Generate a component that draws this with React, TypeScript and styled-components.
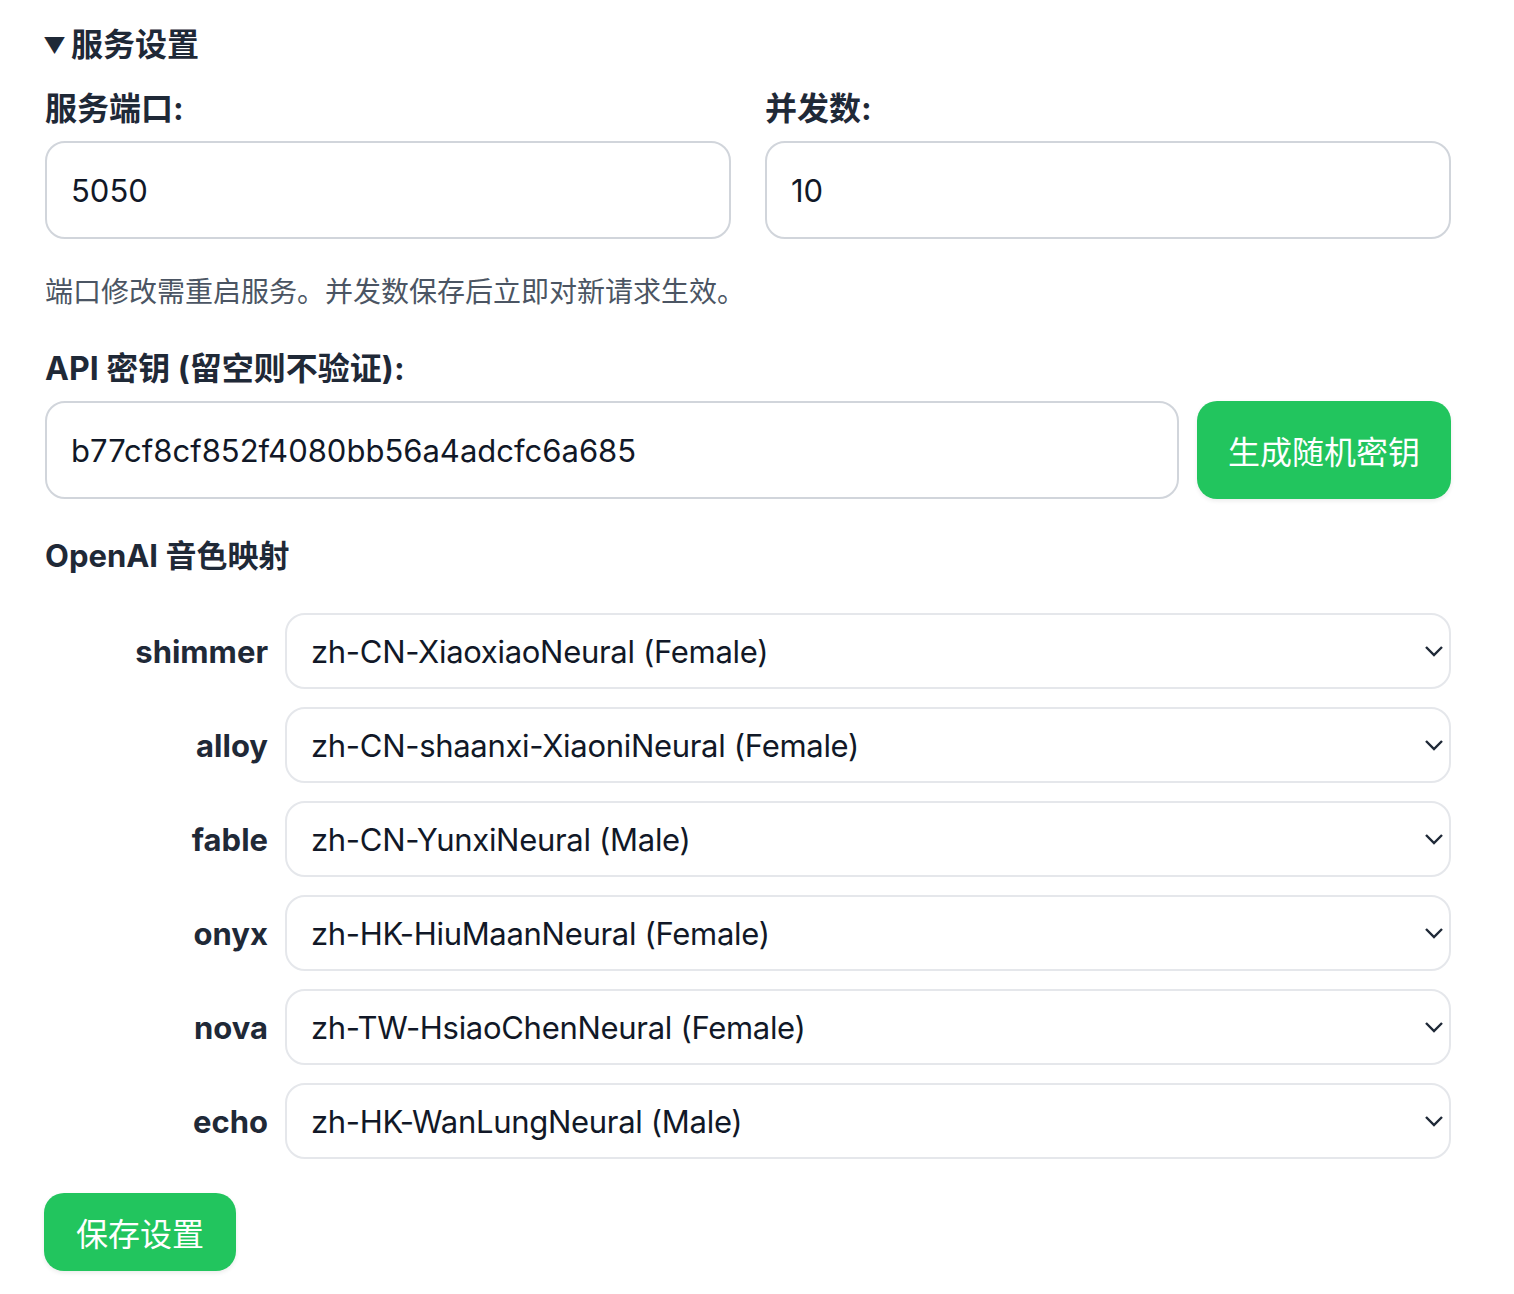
import { useState } from 'react'
import styled, { createGlobalStyle } from 'styled-components'

const GlobalStyle = createGlobalStyle`
  body {
    margin: 0;
    background: #ffffff;
    font-family: Inter, "Noto Sans CJK SC", sans-serif;
    color: #1f2937;
  }
`

const Page = styled.div`
  padding: 26px 0 40px 45px;
  width: 1406px;
`

const Details = styled.details`
  margin: 0;
`

const Summary = styled.summary`
  list-style: none;
  font-size: 32px;
  line-height: 38px;
  font-weight: 700;
  cursor: pointer;
  display: flex;
  align-items: center;
  gap: 5px;
  margin-left: -2px;
  &::-webkit-details-marker {
    display: none;
  }
  &::before {
    content: '▼';
    font-size: 22px;
    line-height: 38px;
  }
`

const PortGrid = styled.div`
  display: grid;
  grid-template-columns: 1fr 1fr;
  gap: 34px;
  margin-top: 27px;
`

const Field = styled.div`
  display: flex;
  flex-direction: column;
`

const Label = styled.label<{ $gap?: number }>`
  font-size: 32px;
  line-height: 36px;
  font-weight: 700;
  margin-bottom: ${(p) => p.$gap ?? 14}px;
`

const TextInput = styled.input`
  box-sizing: border-box;
  height: 98px;
  width: 100%;
  border: 2px solid #d1d5db;
  border-radius: 20px;
  padding: 0 24px;
  font-family: Inter, "Noto Sans CJK SC", sans-serif;
  font-size: 31px;
  color: #111827;
  background: #fff;
  outline: none;
`

const Hint = styled.p`
  margin: 36px 0 42px;
  font-size: 28px;
  line-height: 34px;
  color: #4b5563;
`

const KeyRow = styled.div`
  display: flex;
  gap: 18px;
`

const GreenButton = styled.button<{ $height: number }>`
  flex: none;
  height: ${(p) => p.$height}px;
  padding: 0 31px;
  border: none;
  border-radius: 20px;
  background: #22c55e;
  color: #fff;
  font-family: Inter, "Noto Sans CJK SC", sans-serif;
  font-size: 32px;
  cursor: pointer;
  box-shadow: 0 2px 4px rgba(0, 0, 0, 0.08);
`

const Heading = styled.h3`
  margin: 39px 0 39px;
  font-size: 31px;
  line-height: 36px;
  font-weight: 700;
`

const VoiceList = styled.div`
  display: flex;
  flex-direction: column;
  gap: 18px;
`

const VoiceRow = styled.div`
  display: grid;
  grid-template-columns: 223px 1fr;
  gap: 17px;
  align-items: center;
`

const VoiceName = styled.label`
  text-align: right;
  font-size: 31px;
  font-weight: 700;
`

const SelectWrap = styled.div`
  position: relative;
`

const Select = styled.select`
  appearance: none;
  box-sizing: border-box;
  width: 100%;
  height: 76px;
  border: 2px solid #e5e7eb;
  border-radius: 20px;
  padding: 0 60px 0 24px;
  font-family: Inter, "Noto Sans CJK SC", sans-serif;
  font-size: 31px;
  letter-spacing: -0.3px;
  color: #111827;
  background: #fff;
  outline: none;
`

const Chevron = styled.svg`
  position: absolute;
  right: 7px;
  top: 50%;
  transform: translateY(-50%);
  pointer-events: none;
`

const SaveRow = styled.div`
  margin-top: 34px;
`

const SaveButton = styled(GreenButton)`
  padding: 0 32px;
  margin-left: -1px;
`

const voices = [
  ['shimmer', 'zh-CN-XiaoxiaoNeural (Female)'],
  ['alloy', 'zh-CN-shaanxi-XiaoniNeural (Female)'],
  ['fable', 'zh-CN-YunxiNeural (Male)'],
  ['onyx', 'zh-HK-HiuMaanNeural (Female)'],
  ['nova', 'zh-TW-HsiaoChenNeural (Female)'],
  ['echo', 'zh-HK-WanLungNeural (Male)'],
]

const options = Array.from(new Set(voices.map((v) => v[1])))

const App = () => {
  const [port, setPort] = useState('5050')
  const [concurrency, setConcurrency] = useState('10')
  const [apiKey, setApiKey] = useState('b77cf8cf852f4080bb56a4adcfc6a685')
  const [mapping, setMapping] = useState<Record<string, string>>(
    Object.fromEntries(voices)
  )

  const randomKey = () => {
    const hex = '0123456789abcdef'
    let key = ''
    for (let i = 0; i < 32; i++) key += hex[Math.floor(Math.random() * 16)]
    setApiKey(key)
  }

  return (
    <Page>
      <GlobalStyle />
      <Details open>
        <Summary>服务设置</Summary>
        <PortGrid>
          <Field>
            <Label>服务端口:</Label>
            <TextInput value={port} onChange={(e) => setPort(e.target.value)} />
          </Field>
          <Field>
            <Label>并发数:</Label>
            <TextInput value={concurrency} onChange={(e) => setConcurrency(e.target.value)} />
          </Field>
        </PortGrid>
        <Hint>端口修改需重启服务。并发数保存后立即对新请求生效。</Hint>
        <Field>
          <Label $gap={14}>API 密钥 (留空则不验证):</Label>
          <KeyRow>
            <TextInput value={apiKey} onChange={(e) => setApiKey(e.target.value)} />
            <GreenButton $height={98} onClick={randomKey}>
              生成随机密钥
            </GreenButton>
          </KeyRow>
        </Field>
        <Heading>OpenAI 音色映射</Heading>
        <VoiceList>
          {voices.map(([name]) => (
            <VoiceRow key={name}>
              <VoiceName>{name}</VoiceName>
              <SelectWrap>
                <Select
                  value={mapping[name]}
                  onChange={(e) => setMapping({ ...mapping, [name]: e.target.value })}
                >
                  {options.map((o) => (
                    <option key={o} value={o}>
                      {o}
                    </option>
                  ))}
                </Select>
                <Chevron width="20" height="14" viewBox="0 0 20 14">
                  <path d="M2 3 L10 11 L18 3" fill="none" stroke="#1f2937" strokeWidth="2.4" />
                </Chevron>
              </SelectWrap>
            </VoiceRow>
          ))}
        </VoiceList>
        <SaveRow>
          <SaveButton $height={78}>保存设置</SaveButton>
        </SaveRow>
      </Details>
    </Page>
  )
}

export default App
